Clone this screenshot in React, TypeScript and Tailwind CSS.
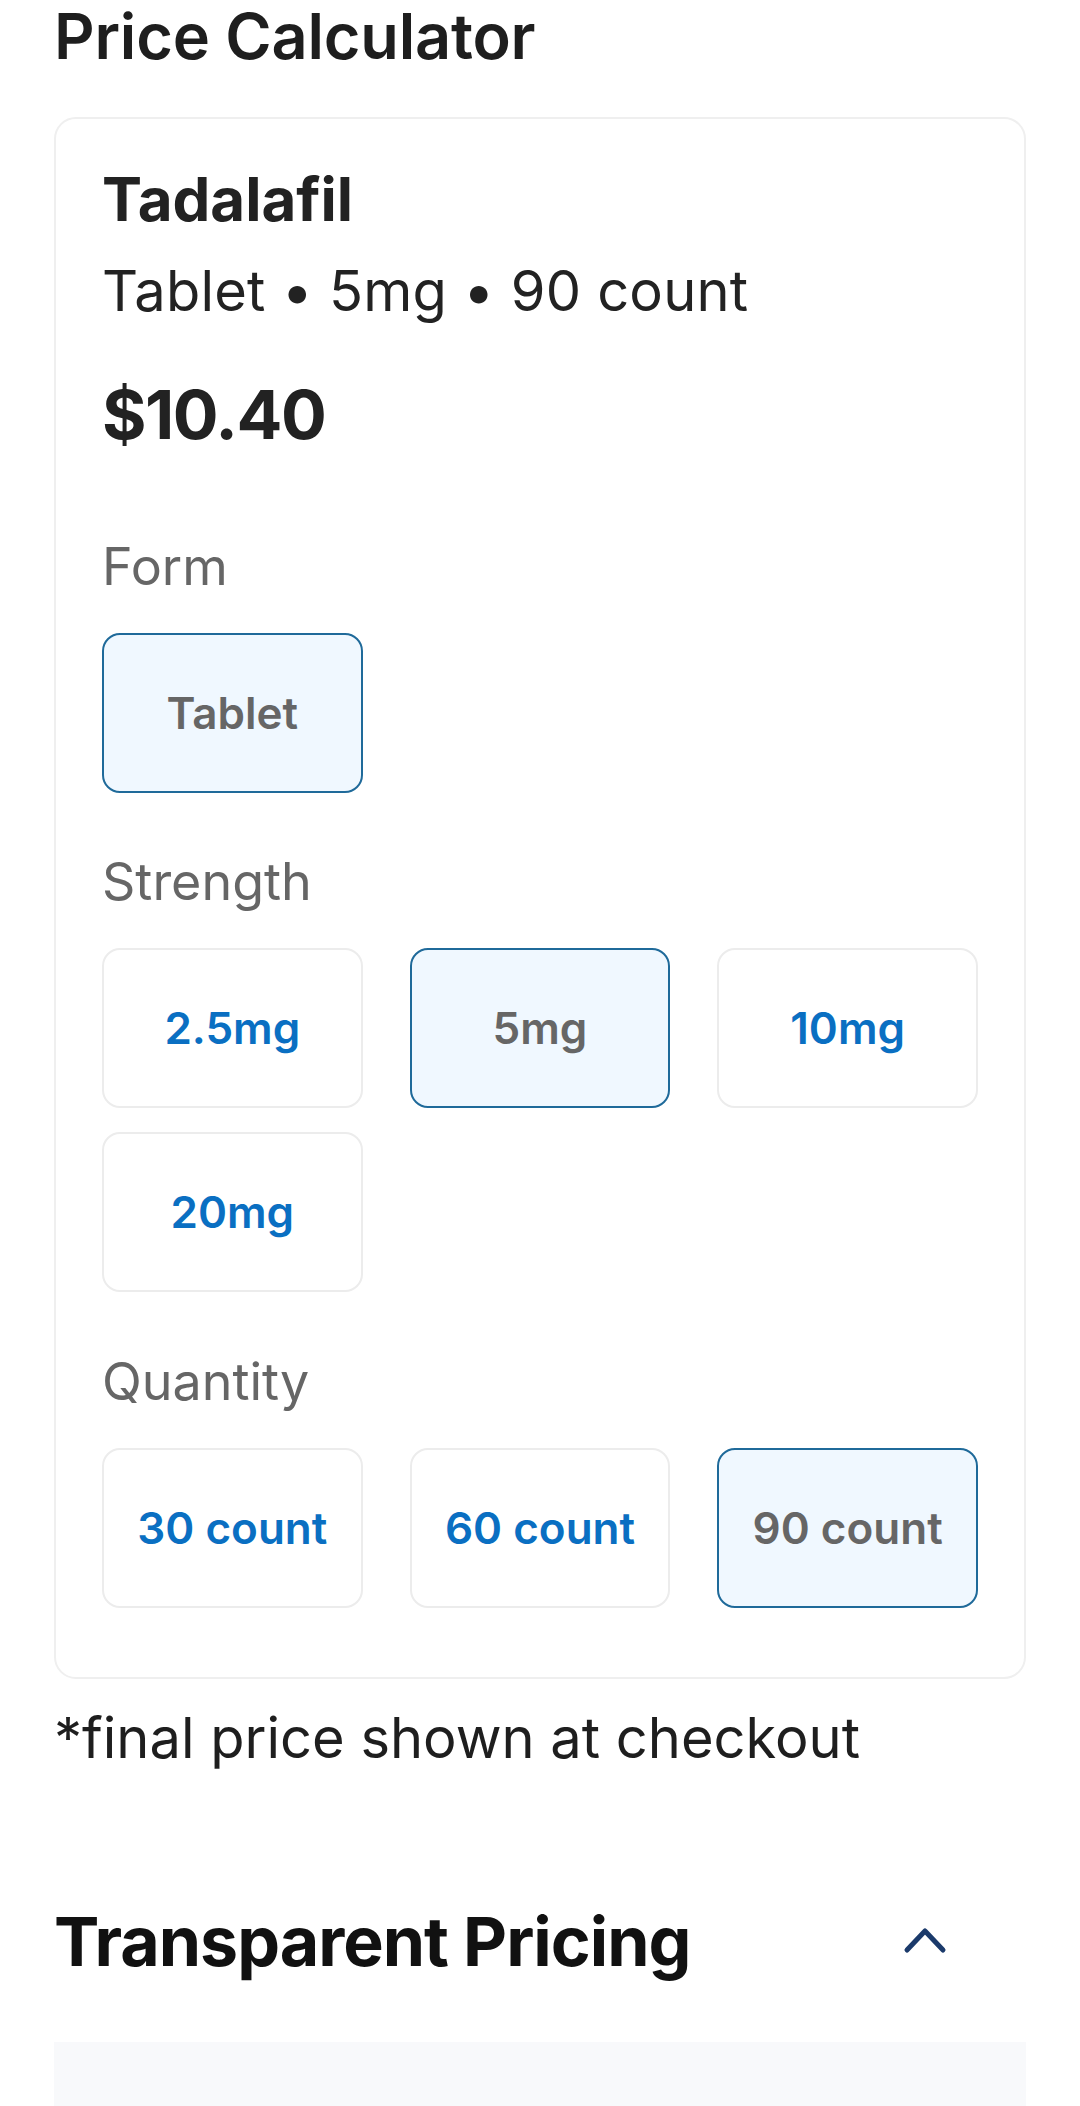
import React from "react";

type Opt = { label: string; selected?: boolean };

function OptionGrid({ options }: { options: Opt[] }) {
  return (
    <div className="mt-[35px] grid grid-cols-3 gap-x-[47px] gap-y-[24px]">
      {options.map((o) => (
        <div
          key={o.label}
          className={
            o.selected
              ? "flex h-[160px] items-center justify-center rounded-[18px] border-2 border-[#1f6a9a] bg-[#f0f8ff] text-[44px] font-semibold leading-none text-[#666666]"
              : "flex h-[160px] items-center justify-center rounded-[18px] border-2 border-[#ececec] bg-white text-[44px] font-semibold leading-none text-[#0a6fc2]"
          }
        >
          {o.label}
        </div>
      ))}
    </div>
  );
}

function Label({ children }: { children: React.ReactNode }) {
  return <div className="text-[52px] leading-[62px] font-normal text-[#666666]">{children}</div>;
}

export default function App() {
  return (
    <div
      className="min-h-[2106px] bg-white px-[54px] text-[#1e1e1e]"
      style={{ fontFamily: "Inter, 'Noto Sans', sans-serif" }}
    >
      <h1 className="text-[63px] leading-[72px] font-semibold tracking-[-0.2px] text-[#1e1e1e]">Price Calculator</h1>

      <div className="mt-[45px] rounded-[22px] border-2 border-[#efefef] px-[46px] pt-[44px] pb-[69px]">
        <div className="text-[60px] leading-[72px] font-bold text-[#222222]">Tadalafil</div>
        <div className="mt-[22px] text-[56px] leading-[68px] font-normal tracking-[0.2px] text-[#222222]">
          Tablet • 5mg • 90 count
        </div>
        <div className="mt-[48px] text-[68px] leading-[82px] font-bold tracking-[-1.5px] text-[#222222]">$10.40</div>

        <div className="mt-[81px]">
          <Label>Form</Label>
          <OptionGrid options={[{ label: "Tablet", selected: true }]} />
        </div>

        <div className="mt-[58px]">
          <Label>Strength</Label>
          <OptionGrid
            options={[
              { label: "2.5mg" },
              { label: "5mg", selected: true },
              { label: "10mg" },
              { label: "20mg" },
            ]}
          />
        </div>

        <div className="mt-[59px]">
          <Label>Quantity</Label>
          <OptionGrid
            options={[{ label: "30 count" }, { label: "60 count" }, { label: "90 count", selected: true }]}
          />
        </div>
      </div>

      <div className="mt-[25px] text-[56px] leading-[68px] font-normal text-[#1e1e1e]">
        *final price shown at checkout
      </div>

      <div className="mt-[128px] flex items-center justify-between pr-[79px]">
        <h2 className="text-[68px] leading-[82px] font-bold tracking-[-1px] text-[#111111]">Transparent Pricing</h2>
        <svg width="44" height="28" viewBox="0 0 44 28" fill="none" className="mt-[-2px]">
          <path
            d="M4 24 L22 5 L40 24"
            stroke="#1b3a6b"
            strokeWidth="5"
            strokeLinecap="round"
            strokeLinejoin="round"
          />
        </svg>
      </div>

      <div className="mt-[60px] h-[400px] bg-[#f8f9fb]"></div>
    </div>
  );
}
